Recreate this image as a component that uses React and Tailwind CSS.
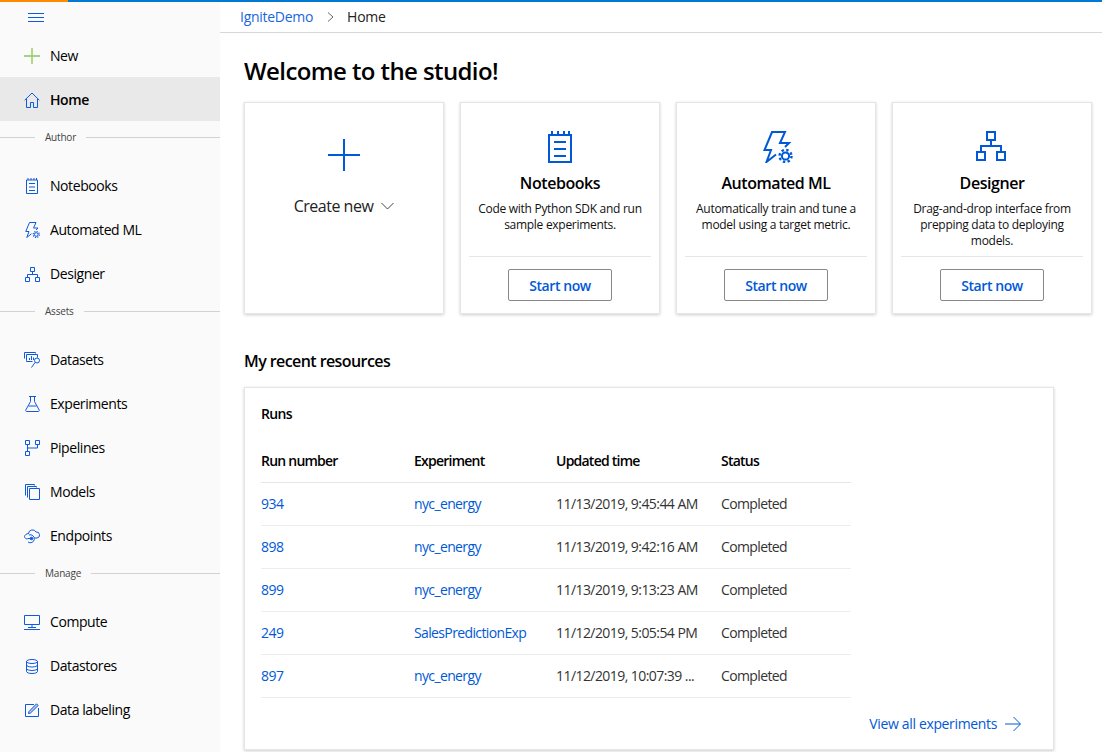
const font = { fontFamily: '"Open Sans", "Noto Sans", sans-serif' };

function NotebookIcon({ className }) {
  return (
    <svg className={className} viewBox="0 0 24 32" fill="none" stroke="currentColor" strokeWidth="2">
      <path d="M1 4h22v27H1z" />
      <path d="M4 0v4M10 0v4M16 0v4M21 0v4" />
      <path d="M6 11h12M6 18h12M6 25h12" />
    </svg>
  );
}

function AutomatedIcon({ className }) {
  return (
    <svg className={className} viewBox="0 0 30 32" fill="none" stroke="currentColor" strokeWidth="2">
      <path d="M13 23.500 3.500 31 8 19H1.500L9 1h13l-5 11h9l-4 4" />
      <circle cx="22.500" cy="25" r="3.600" />
      <circle cx="22.500" cy="25" r="6" strokeWidth="2.400" strokeDasharray="2.400 2.310" />
    </svg>
  );
}

function DesignerIcon({ className }) {
  return (
    <svg className={className} viewBox="0 0 30 30" fill="none" stroke="currentColor" strokeWidth="2">
      <path d="M11 1h8v8h-8zM1 21h8v8H1zM21 21h8v8h-8z" />
      <path d="M15 9v6M5 21v-6h20v6" />
    </svg>
  );
}

function HomeIcon() {
  return (
    <svg className="h-4 w-4" viewBox="0 0 16 16" fill="none" stroke="currentColor">
      <path d="M.7 8.200 8 1l7.300 7.200M2.500 6.800v8.700h4v-5h3v5h4V6.800" />
    </svg>
  );
}

function DatasetsIcon() {
  return (
    <svg className="h-4 w-[17px]" viewBox="0 0 17 16" fill="none" stroke="currentColor">
      <path d="M.5 6.500v-6h11v1" />
      <path d="M2.500 8.500v-6h11v3M2.500 8.500v1h6" />
      <path d="M5.500 8V6M7.500 8V4M9.500 8V5.500" />
      <circle cx="13" cy="8.500" r="2.500" />
      <path d="m11 10.500-3.500 5" />
    </svg>
  );
}

function FlaskIcon() {
  return (
    <svg className="h-4 w-[15px]" viewBox="0 0 15 16" fill="none" stroke="currentColor">
      <path d="M4 .5h7M5.500.5v5L.8 14a1 1 0 0 0 .9 1.500h11.600a1 1 0 0 0 .9-1.500L9.500 5.500v-5M3.500 10h8" />
    </svg>
  );
}

function PipelinesIcon() {
  return (
    <svg className="h-4 w-[15px]" viewBox="0 0 15 16" fill="none" stroke="currentColor">
      <path d="M.5.500h4v4h-4zM10.500.500h4v4h-4zM.5 11.500h4v4h-4z" />
      <path d="M2.500 4.500v7M2.500 8h10V4.500" />
    </svg>
  );
}

function ModelsIcon() {
  return (
    <svg className="h-[16px] w-[15px]" viewBox="0 0 15 16" fill="none" stroke="currentColor">
      <path d="M.5 11.500V.500h9v1M2.500 13.500V2.500h9v1" />
      <path d="M4.500 4.500h10v11h-10z" />
    </svg>
  );
}

function EndpointsIcon() {
  return (
    <svg className="h-4 w-4" viewBox="0 0 16 16" fill="none" stroke="currentColor">
      <path d="M4.500 5.500a4 4 0 0 1 7.500-1.500 3 3 0 0 1 1 6h-2.500" />
      <path d="M5 5.500C2 5.500.5 7.500.5 8.500.5 10 2 11 3.500 11" />
      <path d="M4 14a4 4 0 1 0 1-7" />
      <path d="M3.500 10.500h4" />
      <circle cx="7.500" cy="10.500" r="1.300" fill="currentColor" />
    </svg>
  );
}

function ComputeIcon() {
  return (
    <svg className="h-[15px] w-4" viewBox="0 0 16 15" fill="none" stroke="currentColor">
      <path d="M.5.500h15v9H.5zM8 9.500v3M4 12.500h8M0 14.500h16" />
    </svg>
  );
}

function DatastoresIcon() {
  return (
    <svg className="h-[15px] w-3" viewBox="0 0 12 15" fill="none" stroke="currentColor">
      <ellipse cx="6" cy="2.500" rx="5.500" ry="2" />
      <path d="M.5 2.500v10c0 1.100 2.500 2 5.500 2s5.500-.9 5.500-2v-10" />
      <path d="M.5 6c0 1.100 2.500 2 5.500 2s5.500-.9 5.500-2M.5 9.500c0 1.100 2.500 2 5.500 2s5.500-.9 5.500-2" />
    </svg>
  );
}

function LabelingIcon() {
  return (
    <svg className="h-[14px] w-[14px]" viewBox="0 0 14 14" fill="none" stroke="currentColor">
      <path d="M9 1.500H.5v12h13V5" />
      <path d="M3.500 10.500 4 8.500 11.500.8l1.700 1.700L5.500 10z" fill="currentColor" fillOpacity="0.3" />
    </svg>
  );
}

function NavItem({ icon, label, active }) {
  return (
    <div className={`flex h-11 items-center text-sm tracking-[-0.03em] text-black ${active ? "bg-[#e9e9e9] pt-px font-semibold" : ""}`}>
      <span className="flex w-[50px] shrink-0 justify-center pl-[18px] pr-[4px] text-[#1059dc]">{icon}</span>
      <span>{label}</span>
    </div>
  );
}

function NavDivider({ label, className }) {
  return (
    <div className={`flex items-center text-[10px] tracking-[-0.02em] text-[#444] ${className}`}>
      <span className="h-px w-[35px] bg-[#d2d2d2]" />
      <span className="px-[10px]">{label}</span>
      <span className="h-px flex-1 bg-[#d2d2d2]" />
    </div>
  );
}

function Sidebar() {
  return (
    <aside className="flex w-[220px] shrink-0 flex-col bg-[#fafafa]">
      <div className="flex h-8 items-start pl-[28px] pt-[11px] text-[#1059dc]">
        <svg className="h-[9px] w-4" viewBox="0 0 16 9" fill="none" stroke="currentColor">
          <path d="M0 .5h16M0 4.500h16M0 8.500h16" />
        </svg>
      </div>
      <div className="flex h-[43px] items-center text-sm tracking-[-0.03em] text-black">
        <span className="flex w-[50px] shrink-0 pl-6">
          <svg className="h-4 w-4" viewBox="0 0 16 16" fill="none">
            <path d="M0 8h16" stroke="#7fc76e" strokeWidth="1.500" />
            <path d="M8 0v16" stroke="#9ccb62" strokeWidth="1.500" />
          </svg>
        </span>
        <span>New</span>
      </div>
      <NavItem icon={<HomeIcon />} label="Home" active />
      <NavDivider label="Author" className="mb-[10px] h-[33px]" />
      <NavItem icon={<NotebookIcon className="h-4 w-3" />} label="Notebooks" />
      <NavItem icon={<AutomatedIcon className="h-4 w-[15px]" />} label="Automated ML" />
      <NavItem icon={<DesignerIcon className="h-[15px] w-[15px]" />} label="Designer" />
      <NavDivider label="Assets" className="mb-[12px] h-[30px]" />
      <NavItem icon={<DatasetsIcon />} label="Datasets" />
      <NavItem icon={<FlaskIcon />} label="Experiments" />
      <NavItem icon={<PipelinesIcon />} label="Pipelines" />
      <NavItem icon={<ModelsIcon />} label="Models" />
      <NavItem icon={<EndpointsIcon />} label="Endpoints" />
      <NavDivider label="Manage" className="mb-[11px] h-[31px]" />
      <NavItem icon={<ComputeIcon />} label="Compute" />
      <NavItem icon={<DatastoresIcon />} label="Datastores" />
      <NavItem icon={<LabelingIcon />} label="Data labeling" />
    </aside>
  );
}

function StartCard({ icon, title, lines }) {
  return (
    <div className="flex h-[212px] w-[200px] flex-col border border-[#e6e6e6] bg-white px-2 shadow-[0_1px_3px_rgba(0,0,0,0.2)]">
      <div className="flex flex-1 flex-col items-center pt-[28px]">
        <div className="flex h-8 items-start justify-center text-[#0059d6]">{icon}</div>
        <div className="mt-2 text-base leading-6 font-semibold tracking-[-0.028em] text-black">{title}</div>
        <div className="mt-[6px] text-center text-xs leading-4 tracking-[-0.024em] whitespace-nowrap text-[#111]">
          {lines.map((line) => (
            <div key={line}>{line}</div>
          ))}
        </div>
      </div>
      <div className="flex h-[57px] justify-center border-t border-[#e6e6e6] pt-3">
        <button className="h-8 w-[104px] rounded-[2px] border border-[#8a8886] bg-white pt-px text-sm font-semibold tracking-[-0.03em] text-[#0059d6]">
          Start now
        </button>
      </div>
    </div>
  );
}

const runs = [
  { id: "934", experiment: "nyc_energy", time: "11/13/2019, 9:45:44 AM" },
  { id: "898", experiment: "nyc_energy", time: "11/13/2019, 9:42:16 AM" },
  { id: "899", experiment: "nyc_energy", time: "11/13/2019, 9:13:23 AM" },
  { id: "249", experiment: "SalesPredictionExp", time: "11/12/2019, 5:05:54 PM" },
  { id: "897", experiment: "nyc_energy", time: "11/12/2019, 10:07:39 ..." },
];

function RunsCard() {
  return (
    <div className="mt-[14px] h-[363px] w-[810px] border border-[#e6e6e6] bg-white pt-4 pl-4 shadow-[0_1px_3px_rgba(0,0,0,0.2)]">
      <div className="text-sm leading-5 font-semibold tracking-[-0.05em] text-black">Runs</div>
      <table className="mt-[15px] w-[590px] table-fixed border-collapse text-left text-sm tracking-[-0.04em]">
        <thead>
          <tr className="h-[43px] border-b border-[#e6e6e6] text-black">
            <th className="w-[153px] pt-[2px] font-semibold tracking-[-0.055em]">Run number</th>
            <th className="w-[142px] pt-[2px] font-semibold tracking-[-0.055em]">Experiment</th>
            <th className="w-[165px] pt-[2px] font-semibold tracking-[-0.055em]">Updated time</th>
            <th className="pt-[2px] font-semibold tracking-[-0.055em]">Status</th>
          </tr>
        </thead>
        <tbody>
          {runs.map((run) => (
            <tr key={run.id} className="h-[43px] border-b border-[#ededed] text-[#333]">
              <td className="text-[#0059d6]">{run.id}</td>
              <td className="tracking-[-0.045em] text-[#0059d6]">{run.experiment}</td>
              <td className="whitespace-nowrap">{run.time}</td>
              <td className="tracking-[-0.045em]">Completed</td>
            </tr>
          ))}
        </tbody>
      </table>
      <div className="mt-4 flex items-center justify-end pr-8 text-sm leading-5 tracking-[-0.025em] text-[#0059d6]">
        <span>View all experiments</span>
        <svg className="ml-2 h-4 w-4" viewBox="0 0 16 16" fill="none" stroke="currentColor">
          <path d="M0 8h15M8.500 1l7 7-7 7" />
        </svg>
      </div>
    </div>
  );
}

export default function App() {
  return (
    <div className="flex h-screen w-full flex-col overflow-hidden bg-white" style={font}>
      <div className="flex h-[2px] shrink-0">
        <div className="w-[68px] bg-[#ff8c00]" />
        <div className="flex-1 bg-[#0078d4]" />
      </div>
      <div className="flex min-h-0 flex-1">
        <Sidebar />
        <main className="min-w-0 flex-1">
          <div className="flex h-[31px] items-center border-b border-[#d8d8d8] pl-5 text-sm tracking-[-0.02em]">
            <span className="text-[#1a66dc]">IgniteDemo</span>
            <svg className="mr-[13px] ml-[14px] h-[10px] w-[7px] text-[#666]" viewBox="0 0 7 10" fill="none" stroke="currentColor">
              <path d="m1 .5 5 4.500-5 4.500" />
            </svg>
            <span className="text-[#222]">Home</span>
          </div>
          <div className="pl-6">
            <h1 className="mt-[22px] text-2xl leading-8 font-semibold tracking-[-0.025em] text-black">Welcome to the studio!</h1>
            <div className="mt-[15px] flex gap-4">
              <div className="flex h-[212px] w-[200px] flex-col items-center border border-[#e6e6e6] bg-white pt-9 shadow-[0_1px_3px_rgba(0,0,0,0.2)]">
                <svg className="h-8 w-8 text-[#0059d6]" viewBox="0 0 32 32" fill="none" stroke="currentColor" strokeWidth="2">
                  <path d="M16 0v32M0 16h32" />
                </svg>
                <div className="mt-[23px] flex items-center text-base leading-6 tracking-[-0.03em] text-[#222]">
                  <span>Create new</span>
                  <svg className="ml-2 h-2 w-[13px] text-[#444]" viewBox="0 0 13 8" fill="none" stroke="currentColor">
                    <path d="m.5 1 6 6 6-6" />
                  </svg>
                </div>
              </div>
              <StartCard
                icon={<NotebookIcon className="h-8 w-6" />}
                title="Notebooks"
                lines={["Code with Python SDK and run", "sample experiments."]}
              />
              <StartCard
                icon={<AutomatedIcon className="ml-[3px] h-8 w-[30px]" />}
                title="Automated ML"
                lines={["Automatically train and tune a", "model using a target metric."]}
              />
              <StartCard
                icon={<DesignerIcon className="mr-[2px] h-[30px] w-[30px]" />}
                title="Designer"
                lines={["Drag-and-drop interface from", "prepping data to deploying", "models."]}
              />
            </div>
            <h2 className="mt-[35px] text-base leading-6 font-semibold tracking-[-0.036em] text-black">My recent resources</h2>
            <RunsCard />
          </div>
        </main>
      </div>
    </div>
  );
}
